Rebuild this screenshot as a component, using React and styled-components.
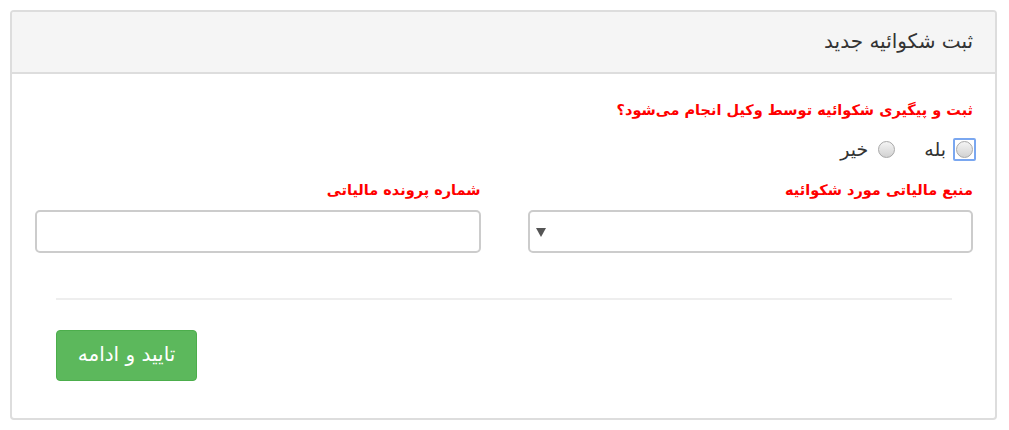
import React from "react";
import styled, { createGlobalStyle } from "styled-components";

const GlobalStyle = createGlobalStyle`
  html, body {
    margin: 0;
    padding: 0;
    background: #fff;
  }
  body {
    font-family: "DejaVu Sans", "Noto Sans", sans-serif;
    color: #333;
  }
`;

const Page = styled.div`
  padding: 10px 12px 10px 10px;
  direction: rtl;
`;

const Panel = styled.div`
  border: 2px solid #dddddd;
  border-radius: 4px;
  background: #fff;
  overflow: hidden;
`;

const Heading = styled.div`
  height: 62px;
  box-sizing: border-box;
  background: #f5f5f5;
  border-bottom: 2px solid #dddddd;
  display: flex;
  align-items: center;
  padding: 0 22px 2px;
  font-size: 20px;
  color: #333;
`;

const Body = styled.div`
  padding: 24px 22px 37px 23px;
`;

const Label = styled.div`
  color: #ff0000;
  font-weight: bold;
  font-size: 14.5px;
  line-height: 24px;
`;

const RadioRow = styled.div`
  display: flex;
  align-items: center;
  gap: 29px;
  margin-top: 14px;
  height: 26px;
`;

const RadioItem = styled.label`
  display: flex;
  align-items: center;
  gap: 10px;
  font-size: 19px;
  color: #333;
`;

const RadioFrame = styled.span`
  display: flex;
  padding: 1px;
  border: 2px solid ${(p) => (p.$focus ? "#7aa7f0" : "transparent")};
  border-radius: 2px;
  margin: -3px;
`;

const RadioDot = styled.span`
  width: 17px;
  height: 17px;
  box-sizing: border-box;
  border-radius: 50%;
  border: 1px solid #a8a8a8;
  background: linear-gradient(#f4f4f4, #d2d2d2);
`;

const Columns = styled.div`
  display: grid;
  grid-template-columns: 1fr 1fr;
  column-gap: 47px;
  margin-top: 16px;
`;

const Field = styled.div`
  display: flex;
  flex-direction: column;
  gap: 8px;
`;

const Box = styled.div`
  height: 43px;
  box-sizing: border-box;
  border: 2px solid #cccccc;
  border-radius: 5px;
  background: #fff;
  display: flex;
  align-items: center;
  justify-content: flex-end;
  padding: 0 6px;
`;

const Arrow = styled.span`
  width: 0;
  height: 0;
  border-left: 5px solid transparent;
  border-right: 5px solid transparent;
  border-top: 9px solid #555;
  margin-top: 2px;
`;

const Footer = styled.div`
  margin: 45px 21px 0;
  border-top: 2px solid #eeeeee;
  padding-top: 30px;
  display: flex;
  justify-content: flex-end;
`;

const Button = styled.button`
  background: #5cb85c;
  border: 1px solid #4cae4c;
  border-radius: 4px;
  color: #fff;
  font-family: "DejaVu Sans", "Noto Sans", sans-serif;
  font-size: 20px;
  height: 51px;
  width: 141px;
  padding: 0 0 4px;
  cursor: pointer;
`;

export default function App() {
  return (
    <Page>
      <GlobalStyle />
      <Panel>
        <Heading>ثبت شکوائیه جدید</Heading>
        <Body>
          <Label>ثبت و پیگیری شکوائیه توسط وکیل انجام می‌شود؟</Label>
          <RadioRow>
            <RadioItem>
              <RadioFrame $focus>
                <RadioDot />
              </RadioFrame>
              بله
            </RadioItem>
            <RadioItem>
              <RadioFrame>
                <RadioDot />
              </RadioFrame>
              خیر
            </RadioItem>
          </RadioRow>
          <Columns>
            <Field>
              <Label>منبع مالیاتی مورد شکوائیه</Label>
              <Box>
                <Arrow />
              </Box>
            </Field>
            <Field>
              <Label>شماره پرونده مالیاتی</Label>
              <Box />
            </Field>
          </Columns>
          <Footer>
            <Button>تایید و ادامه</Button>
          </Footer>
        </Body>
      </Panel>
    </Page>
  );
}
